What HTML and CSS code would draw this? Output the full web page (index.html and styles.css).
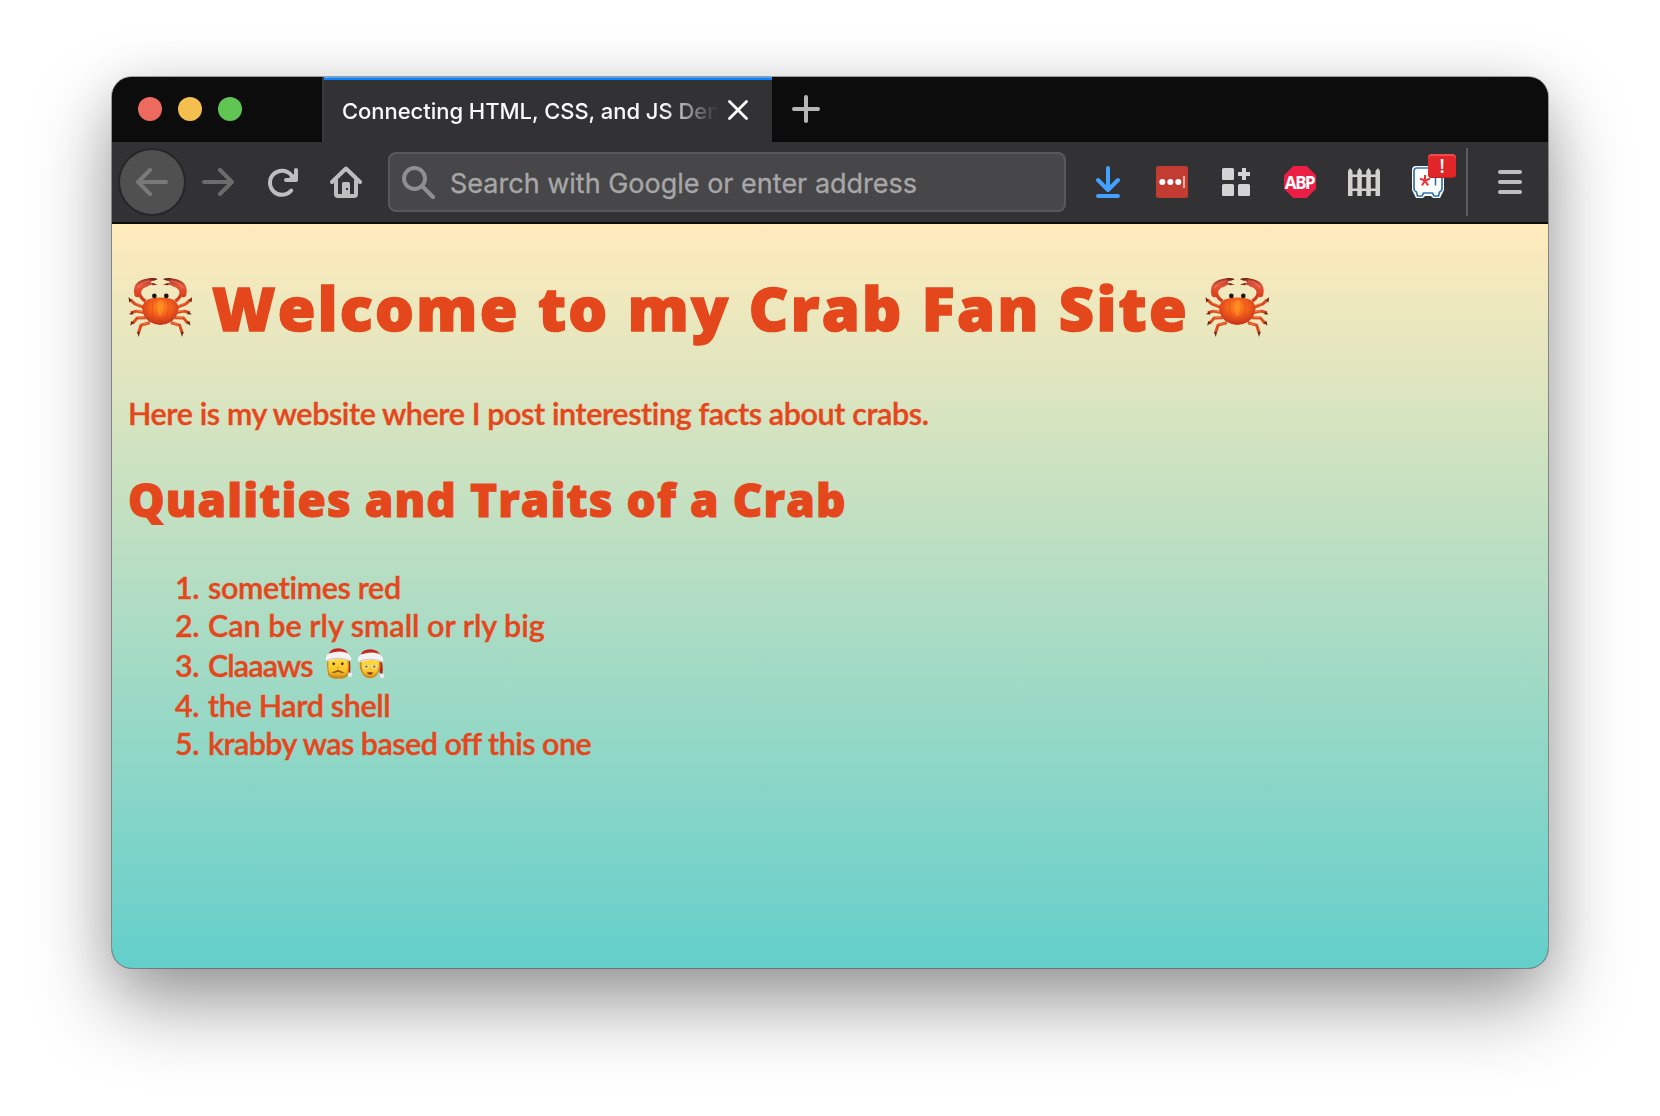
FILE: index.html
```html
<!DOCTYPE html>
<html lang="en">
<head>
<meta charset="utf-8">
<title>Connecting HTML, CSS, and JS Demo</title>
<link rel="stylesheet" href="styles.css">
</head>
<body>
<svg class="defs" width="0" height="0" aria-hidden="true">
  <defs>
    <radialGradient id="shell" cx=".5" cy=".35" r=".65">
      <stop offset="0" stop-color="#ff8a1f"/><stop offset=".45" stop-color="#f4601b"/><stop offset="1" stop-color="#c4301a"/>
    </radialGradient>
    <linearGradient id="claw" x1="0" y1="0" x2="0" y2="1">
      <stop offset="0" stop-color="#9c3022"/><stop offset=".4" stop-color="#e4553a"/><stop offset="1" stop-color="#dc3d1c"/>
    </linearGradient>
    <g id="crab-half">
      <path d="M107 123 Q88 110 89 94 Q92 79 113 74" fill="none" stroke="#d73d1c" stroke-width="10"/>
      <path d="M74 106 Q66 66 103 57 Q124 51 144 57 Q126 61 122 67 Q134 67 144 73 Q126 72 115 77 Q94 82 91 101 Q91 109 85 111 Q76 112 74 106Z" fill="url(#claw)"/>
      <path d="M83 84 Q93 65 120 62" fill="none" stroke="#f7a07c" stroke-width="4" opacity=".4"/>
      <path d="M116 54 Q134 52 144 56 L133 61 Q127 58 116 54Z M127 69 L144 73 L128 75Z" fill="#6e241d"/>
      <g fill="none" stroke="#dd4a1c" stroke-width="9" stroke-linejoin="round">
        <path d="M104 142 L75 131 L62 119"/><path d="M103 157 L80 153 L63 158"/>
        <path d="M108 173 L82 174 L68 190"/><path d="M120 188 L94 195 L87 216"/>
      </g>
      <path d="M56 110 L66 119 L58 127Z M57 162 L69 153 L70 163Z M61 197 L64 183 L73 188Z M87 231 L81 215 L91 215Z" fill="#71251a"/>
      <path d="M102 138 L78 129 M101 155 L80 151 M104 171 L85 172 M116 189 L98 193" fill="none" stroke="#ff925b" stroke-width="2"/>
    </g>
    <symbol id="crab" viewBox="55 50 195 184">
      <use href="#crab-half"/>
      <use href="#crab-half" transform="translate(304 0) scale(-1 1)"/>
      <path d="M136 118 L134 106 M168 118 L170 106" stroke="#c83a1a" stroke-width="6"/>
      <path d="M97 145 Q99 121 124 115 Q152 109 180 115 Q205 121 207 145 Q205 170 185 185 Q152 204 119 185 Q99 170 97 145Z" fill="url(#shell)"/>
      <path d="M144 122 Q152 115 161 122 Q164 145 156 166 Q151 170 147 164 Q139 142 144 122Z" fill="#ff9a22" opacity=".5"/>
      <path d="M130 122 Q124 150 137 183 M174 122 Q180 150 167 183" fill="none" stroke="#d9431b" stroke-width="3" opacity=".5"/>
      <circle cx="134" cy="107" r="7" fill="#24140f"/><circle cx="170" cy="107" r="7" fill="#24140f"/>
    </symbol>
    <linearGradient id="skin" x1="0" y1="0" x2="0" y2="1">
      <stop offset="0" stop-color="#ffdc3c"/><stop offset=".7" stop-color="#fac42a"/><stop offset="1" stop-color="#d9951c"/>
    </linearGradient>
    <symbol id="santa" viewBox="45 22 84 98">
      <path d="M114 50 Q124 68 120 100 L113 96Z" fill="#b51b18"/>
      <path d="M52 55 L116 55 Q120 80 116 103 Q110 117 84 117 Q58 117 54 103 Q49 80 52 55Z" fill="#c98a1c"/>
      <path d="M56 55 L112 55 Q115 78 112 98 Q105 111 84 111 Q62 111 57 98 Q53 78 56 55Z" fill="url(#skin)"/>
      <path d="M64 97 Q74 96 84 90 Q94 96 104 97 Q95 102 84 96 Q73 102 64 97Z" fill="#8b5a13"/>
      <path d="M81 82 Q84 88 88 82" stroke="#d58d18" stroke-width="3" fill="none"/>
      <circle cx="71" cy="72" r="4" fill="#4a260d"/><circle cx="97" cy="72" r="4" fill="#4a260d"/>
      <path d="M55 45 Q61 24 86 25 Q113 26 119 52Z" fill="#c8261f"/>
      <path d="M47 55 Q50 42 60 40 Q86 30 110 39 Q122 44 124 58 Q121 66 114 62 Q84 53 57 63 Q47 65 47 55Z" fill="#f4f2f2"/>
      <path d="M52 61 Q84 49 119 62" fill="none" stroke="#c9c5ca" stroke-width="3"/>
      <circle cx="120" cy="105" r="7" fill="#eee9ea"/>
    </symbol>
    <symbol id="mrs-claus" viewBox="141 22 84 98">
      <path d="M209 52 Q221 70 217 103 L209 99Z" fill="#b51b18"/>
      <path d="M151 60 L209 60 Q217 82 206 96 Q197 116 180 115 Q162 116 154 96 Q146 82 151 60Z" fill="#c98a1c"/>
      <path d="M155 58 L206 58 Q209 82 202 96 Q193 112 180 111 Q166 112 159 96 Q152 82 155 58Z" fill="url(#skin)"/>
      <path d="M170 99 Q180 96 190 99 Q180 110 170 99Z" fill="#7b2a14"/>
      <circle cx="169" cy="80" r="3.5" fill="#4a260d"/><circle cx="193" cy="80" r="3.5" fill="#4a260d"/>
      <path d="M160 76 h16 q2 12 -8 12 q-9 0 -8 -12Z M185 76 h16 q1 12 -8 12 q-9 0 -8 -12Z M176 79 q4 -3 9 0" fill="#fff" fill-opacity=".25" stroke="#e9dcb0" stroke-width="2.5"/>
      <path d="M151 47 Q157 27 182 28 Q209 29 215 55Z" fill="#c8261f"/>
      <path d="M143 58 Q146 45 156 43 Q182 33 206 42 Q218 47 220 61 Q217 69 210 65 Q180 56 153 66 Q143 68 143 58Z" fill="#f4f2f2"/>
      <path d="M148 64 Q180 52 215 65" fill="none" stroke="#c9c5ca" stroke-width="3"/>
      <circle cx="216" cy="108" r="7" fill="#eee9ea"/>
    </symbol>
  </defs>
</svg>

<div class="window">
  <header class="tabs">
    <div class="lights"><i class="light red"></i><i class="light yellow"></i><i class="light green"></i></div>
    <div class="tab">
      <span class="tab-title">Connecting HTML, CSS, and JS Demo</span>
      <svg class="close" width="20" height="20" viewBox="0 0 20 20"><path d="M1.5 1.5 L18.5 18.5 M18.5 1.5 L1.5 18.5"/></svg>
    </div>
    <svg class="new-tab" width="28" height="28" viewBox="0 0 28 28"><path d="M14 2 V26 M2 14 H26"/></svg>
  </header>

  <nav class="toolbar">
    <span class="slot back"><svg width="32" height="28" viewBox="0 0 32 28"><path d="M2 14 H30 M14 2 L2 14 L14 26"/></svg></span>
    <span class="slot forward"><svg width="32" height="28" viewBox="0 0 32 28"><path d="M2 14 H30 M18 2 L30 14 L18 26"/></svg></span>
    <span class="slot reload"><svg width="32" height="32" viewBox="0 0 32 32"><path d="M25.2 24.5 A12 12 0 1 1 25.5 9.5" fill="none" stroke="#bebebf" stroke-width="4" stroke-linecap="round"/><path d="M32 4 V14 Q32 16 30 16 H20 Q18 16 18 14 Q18 12 20 12 H23 L28 8 V4 Q28 2 30 2 Q32 2 32 4Z" fill="#bebebf"/></svg></span>
    <span class="slot home"><svg width="32" height="32" viewBox="0 0 32 32"><path d="M2 16 L16 2.5 L30 16 M6 14 V28 Q6 30 8 30 H24 Q26 30 26 28 V14" fill="none" stroke="#bebebf" stroke-width="4" stroke-linecap="round" stroke-linejoin="round"/><path fill-rule="evenodd" d="M12 29 V17.500 Q12 16 13.500 16 H18.500 Q20 16 20 17.500 V29Z M16 22 V24 H18 V22Z" fill="#bebebf"/></svg></span>
    <div class="urlbar">
      <svg width="33" height="33" viewBox="0 0 33 33"><circle cx="12.500" cy="12.500" r="10.500"/><path d="M20 20 L31 31"/></svg>
      <span class="placeholder">Search with Google or enter address</span>
    </div>
    <span class="slot"><svg width="24" height="32" viewBox="0 0 24 32" fill="none" stroke="#45a1ff" stroke-width="4" stroke-linecap="round" stroke-linejoin="round"><path d="M12 2 V24 M2 14 L12 24 L22 14 M2 30 H22"/></svg></span>
    <span class="slot"><svg width="32" height="32" viewBox="0 0 32 32"><rect width="32" height="32" rx="2.500" fill="#c33c32"/><circle cx="6.300" cy="16" r="3" fill="#fff"/><circle cx="14.300" cy="16" r="3" fill="#fff"/><circle cx="22.300" cy="16" r="3" fill="#fff"/><path d="M28 10 V22" stroke="#eec8c5" stroke-width="1.600"/></svg></span>
    <span class="slot"><svg width="28" height="28" viewBox="0 0 28 28" fill="#d4d4d5"><rect width="12" height="12" rx="1.500"/><rect y="16" width="12" height="12" rx="1.500"/><rect x="16" y="16" width="12" height="12" rx="1.500"/><path d="M20 0 h4 v4 h4 v4 h-4 v4 h-4 v-4 h-4 v-4 h4Z"/></svg></span>
    <span class="slot"><span class="abp">ABP</span></span>
    <span class="slot"><svg width="32" height="28" viewBox="0 0 32 28" fill="#d4d2cf"><path d="M0 28 V3 L2 0 L4.500 3 V28Z M9.300 28 V3 L11.500 0 L13.800 3 V28Z M18.300 28 V3 L20.500 0 L22.800 3 V28Z M27.500 28 V3 L30 0 L32 3 V28Z M2 6.500 H30 V9 H2Z M2 20.500 H30 V23 H2Z"/></svg></span>
    <span class="slot safe">
      <svg width="32" height="32" viewBox="0 0 32 32"><path d="M4 0 H28 Q32 0 32 4 V24 L30 28 L28 32 H21 L19 30 H13 L11 32 H4 L2 28 L0 24 V4 Q0 0 4 0Z" fill="#fff"/><path d="M5 2 H27 Q30 2 30 5 V23 Q29 26 27.500 26 L26.500 30 H22 L20.500 27 H11.500 L10 30 H5.500 L4.500 26 Q2 25 2 23 V5 Q2 2 5 2Z" fill="#fff" stroke="#2f73ae" stroke-width="1.700"/><path d="M23.500 10 V19.500" stroke="#2f73ae" stroke-width="1.600"/><path d="M13 9 V14.500 M13 14.500 L8 12.700 M13 14.500 L18 12.700 M13 14.500 L10 19.500 M13 14.500 L16 19.500" stroke="#ec3138" stroke-width="2"/></svg>
      <b class="badge">!</b>
    </span>
    <i class="separator"></i>
    <svg class="menu" width="24" height="24" viewBox="0 0 24 24"><path d="M2 2 H22 M2 12 H22 M2 22 H22"/></svg>
  </nav>

  <main class="page">
    <h1><svg class="crab"><use href="#crab"/></svg><span class="h1-text">Welcome to my Crab Fan Site</span><svg class="crab"><use href="#crab"/></svg></h1>
    <p>Here is my website where I post interesting facts about crabs.</p>
    <h2>Qualities and Traits of a Crab</h2>
    <ol>
      <li>sometimes red</li>
      <li class="wide">Can be rly small or rly big</li>
      <li class="with-emoji">Claaaws<svg class="face"><use href="#santa"/></svg><svg class="face"><use href="#mrs-claus"/></svg></li>
      <li>the Hard shell</li>
      <li class="tight">krabby was based off this one</li>
    </ol>
  </main>
</div>
</body>
</html>
```
FILE: styles.css
```css
* { box-sizing: border-box; }
body {
  margin: 0;
  padding: 77px 112px 0;
  background: #fff;
  height: 1116px;
  overflow: hidden;
}
svg { display: block; flex: none; }
.defs { position: absolute; }

.window {
  width: 1436px;
  height: 891px;
  border-radius: 20px;
  overflow: hidden;
  background: #323234;
  box-shadow: 0 0 0 1px rgba(0, 0, 0, .32), 0 36px 80px rgba(0, 0, 0, .38), 0 8px 50px rgba(0, 0, 0, .1);
}

/* Tab strip */
.tabs { display: flex; height: 65px; background: #0c0c0d; }
.lights { display: flex; gap: 16px; width: 210px; padding: 20px 0 0 26px; }
.light { width: 24px; height: 24px; border-radius: 50%; }
.red { background: #ed6a5e; }
.yellow { background: #f5bf4f; }
.green { background: #61c554; }
.tab {
  display: flex;
  width: 450px;
  padding-left: 18px;
  background: linear-gradient(#4ba5ff 1px, #0a84ff 1px) 0 0 / 448px 3px no-repeat, #323234;
  border-left: 2px solid #39393b;
}
.tab-title {
  width: 377px;
  overflow: hidden;
  white-space: nowrap;
  font: 500 22px/68px Inter, sans-serif;
  letter-spacing: -.04px;
  color: #f9f9fa;
  -webkit-mask-image: linear-gradient(90deg, #000 320px, transparent 376px);
  mask-image: linear-gradient(90deg, #000 320px, transparent 376px);
}
.close { margin: 23px 0 0 9px; }
.close path { stroke: #fff; stroke-width: 2.8; stroke-linecap: round; }
.new-tab { margin: 18px 0 0 20px; }
.new-tab path { stroke: #b6b6b7; stroke-width: 4; stroke-linecap: round; }

/* Navigation toolbar */
.toolbar {
  display: flex;
  align-items: center;
  height: 82px;
  padding-left: 8px;
  background: #323234;
  border-bottom: 2px solid #0c0c0d;
}
.slot { display: flex; flex: none; align-items: center; justify-content: center; width: 64px; height: 64px; }
.back {
  margin-right: 2px;
  border-radius: 50%;
  background: #505051;
  box-shadow: 0 0 0 2px #262627;
}
.back path, .forward path { fill: none; stroke: #79797a; stroke-width: 4; stroke-linecap: round; stroke-linejoin: round; }
.forward path { stroke: #6c6c6d; }
.urlbar {
  display: flex;
  align-items: center;
  width: 678px;
  height: 60px;
  margin: 0 10px;
  padding-left: 12px;
  gap: 15px;
  border: 2px solid #59595b;
  border-radius: 8px;
  background: #474749;
  font: 400 27px/56px Inter, sans-serif;
  color: #a7a7a8;
}
.urlbar svg { fill: none; stroke: #8f8f90; stroke-width: 4; stroke-linecap: round; }
.placeholder { padding-top: 3px; -webkit-text-stroke: .3px #a7a7a8; }
.abp {
  width: 32px;
  height: 32px;
  background: #ed1e45;
  clip-path: polygon(29% 0, 71% 0, 100% 29%, 100% 71%, 71% 100%, 29% 100%, 0 71%, 0 29%);
  font: 700 17px/33px "Noto Sans", sans-serif;
  letter-spacing: -1.4px;
  text-indent: -1px;
  text-align: center;
  color: #fff;
}
.safe { position: relative; }
.badge {
  position: absolute;
  left: 32px;
  top: 4px;
  width: 28px;
  height: 24px;
  border-radius: 4px;
  background: #e22528;
  box-shadow: inset 0 2px #e84e50, inset 0 -1px #c41c20;
  font: 600 19px/25px "Open Sans", sans-serif;
  text-align: center;
  color: #fff;
}
.separator { width: 2px; height: 68px; margin: 0 30px 0 6px; background: #5b5b5d; }
.menu path { stroke: #bebebf; stroke-width: 4; stroke-linecap: round; }

/* Page */
.page {
  height: 744px;
  padding: 43px 16px 0;
  background: linear-gradient(#ffebbc, #63cfcb);
  font-family: "Gill Sans", Lato, sans-serif;
  color: #e5471d;
  -webkit-text-stroke: .4px #e5471d;
  white-space: nowrap;
}
h1, h2, p, ol { margin: 0; padding: 0; }
h1, h2 { font-family: "Gill Sans", "Open Sans", sans-serif; font-weight: 800; }
h1 { display: flex; height: 80px; font-size: 61px; line-height: 82px; -webkit-text-stroke-width: 1.6px; }
.crab { width: 65px; height: 61px; margin-top: 10px; }
.h1-text { width: 1012px; padding-left: 19px; letter-spacing: 2.35px; }
p { margin-top: 47px; font-size: 30.5px; font-weight: 600; line-height: 38px; letter-spacing: -.4px; }
h2 { margin-top: 39px; font-size: 46px; line-height: 56px; letter-spacing: 1.05px; -webkit-text-stroke-width: 1.1px; }
ol {
  margin-top: 41px;
  list-style: none;
  counter-reset: trait;
  font-size: 30.5px;
  font-weight: 600;
  line-height: 38px;
  letter-spacing: -.35px;
}
li { display: flex; counter-increment: trait; }
li::before { content: counter(trait) "."; width: 71px; margin-right: 9px; text-align: right; letter-spacing: -.5px; }
.wide { letter-spacing: 0; }
.tight { letter-spacing: -.53px; }
.with-emoji { line-height: 42px; letter-spacing: -.9px; }
.face { width: 28px; height: 33px; margin: 3px -8px 0 12px; }
.face + .face { margin-left: 12px; }
```
